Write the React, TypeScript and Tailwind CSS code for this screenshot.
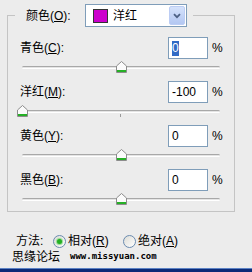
import React from "react";

const font = { fontFamily: '"Liberation Sans","Noto Sans CJK SC",sans-serif' };

function Thumb() {
  return (
    <svg width="11" height="12" viewBox="0 0 11 12">
      <path d="M0.5 5 L5.5 0.5 L10.5 5 V11.5 H0.5 Z" fill="#fbfbfb" stroke="#8c8c8c" />
      <rect x="1" y="9" width="9" height="2" fill="#26b026" />
    </svg>
  );
}

function Slider({ value }: { value: number }) {
  const left = ((value + 100) / 200) * 198 - 5;
  return (
    <div className="h-[20px] ml-[14px] w-[198px] relative">
      <div className="absolute top-[7px] left-0 right-0 h-[3px] rounded-full bg-[#e4e4e4] border-t border-t-[#a8a8a8] border-b border-b-white" />
      <div className="absolute left-[98px] top-[11px] w-[1px] h-[3px] bg-[#9a9a9a]" />
      <div className="absolute top-[2px]" style={{ left }}>
        <Thumb />
      </div>
    </div>
  );
}

function Row({ label, u, rest, value, selected, slider }: { label: string; u: string; rest: string; value: string; selected?: boolean; slider: number }) {
  return (
    <div className="flex flex-col">
      <div className="flex items-center h-[22px]">
        <div className="flex-1 pl-[12px] text-[12px] text-black">
          {label}(<u>{u}</u>){rest}
        </div>
        <div className="w-[40px] h-[22px] bg-white border border-[#7f9db9] flex items-center pl-[3px] text-[12px] text-black">
          {selected ? <span className="bg-[#316ac5] text-white leading-[15px] px-[0px]">{value}</span> : <span>{value}</span>}
        </div>
        <div className="w-[26px] pl-[4px] text-[12px] text-black">%</div>
      </div>
      <Slider value={slider} />
    </div>
  );
}

function Radio({ checked }: { checked?: boolean }) {
  return (
    <div className="w-[13px] h-[13px] rounded-full border border-[#6a8bb0] bg-gradient-to-br from-[#dcdcd6] to-white flex items-center justify-center">
      {checked && <div className="w-[5px] h-[5px] rounded-full bg-[#23b023] shadow-[0_0_1px_1px_#8fd88f]" />}
    </div>
  );
}

export default function App() {
  return (
    <div className="w-[252px] h-[272px] bg-[#ececec] flex flex-col pt-[4px] overflow-hidden" style={font}>
      <fieldset className="ml-[7px] w-[228px] border border-[#c4c4c4] p-0 m-0 flex flex-col">
        <legend className="ml-[7px] pl-[11px] pr-[6px] flex items-center h-[23px]">
          <span className="w-[59px] text-[12px] text-black">颜色(<u>O</u>):</span>
          <div className="w-[102px] h-[23px] bg-white border border-[#7f9db9] flex items-center relative">
            <div className="ml-[7px] w-[15px] h-[14px] bg-[#cc00cc] border border-[#333]" />
            <span className="ml-[5px] text-[12px] text-black">洋红</span>
            <div className="ml-auto mr-[1px] w-[16px] h-[19px] rounded-[2px] bg-gradient-to-b from-[#d5e2fb] to-[#b3c7f2] border border-[#bccdf4] flex items-center justify-center">
              <svg width="8" height="6" viewBox="0 0 8 6">
                <path d="M1 1.2 L4 4.2 L7 1.2" fill="none" stroke="#4d6185" strokeWidth="1.8" />
              </svg>
            </div>
          </div>
        </legend>
        <div className="mt-[10px] flex flex-col gap-[2px]">
          <Row label="青色" u="C" rest=":" value="0" selected slider={0} />
          <Row label="洋红" u="M" rest=":" value="-100" slider={-100} />
          <Row label="黄色" u="Y" rest=":" value="0" slider={0} />
          <Row label="黑色" u="B" rest=":" value="0" slider={0} />
        </div>
      </fieldset>
      <div className="mt-[20px] h-[18px] flex items-center pl-[16px] text-[12px] text-black">
        <span className="w-[37px]">方法:</span>
        <Radio checked />
        <span className="ml-[2px] w-[55px]">相对(<u>R</u>)</span>
        <Radio />
        <span className="ml-[2px]">绝对(<u>A</u>)</span>
      </div>
      <div className="h-[14px] flex items-center pl-[12px]">
        <span className="text-[12px] text-black">思缘论坛</span>
        <span className="ml-[10px] text-[9px] text-black tracking-[0px]" style={{ fontFamily: '"DejaVu Sans Mono",monospace', fontWeight: 700 }}>www.missyuan.com</span>
      </div>
      <div className="mt-[4px] h-[4px] bg-[#0b2a78] border-t border-[#5c82c4]" />
    </div>
  );
}
